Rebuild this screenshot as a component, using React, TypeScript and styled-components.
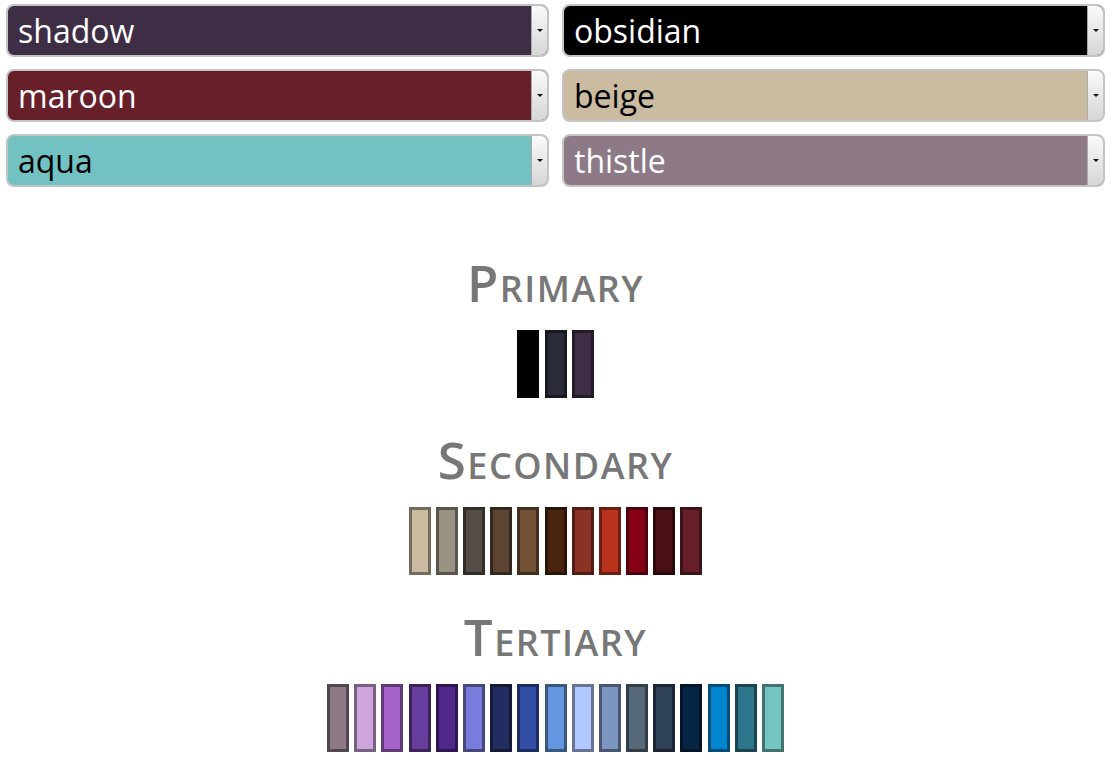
import React from 'react';
import styled, { createGlobalStyle } from 'styled-components';

const GlobalStyle = createGlobalStyle`
  html, body {
    margin: 0;
    padding: 0;
    background: #fff;
    font-family: 'Open Sans', 'Noto Sans', sans-serif;
  }
`;

const Page = styled.div`
  padding: 4px 9px 0 6px;
`;

const PickerGrid = styled.div`
  display: grid;
  grid-template-columns: 1fr 1fr;
  column-gap: 13px;
  row-gap: 12px;
`;

const Picker = styled.div<{ $bg: string; $fg: string }>`
  display: flex;
  height: 53px;
  box-sizing: border-box;
  border: 2px solid #c4c4c4;
  border-radius: 8px;
  overflow: hidden;
  background: ${(p) => p.$bg};
  color: ${(p) => p.$fg};
`;

const PickerSelect = styled.select`
  flex: 1;
  appearance: none;
  -webkit-appearance: none;
  border: none;
  outline: none;
  background: transparent;
  color: inherit;
  font-family: 'Open Sans', sans-serif;
  font-size: 32px;
  padding: 0 0 0 10px;
  margin: 0;
`;

const ArrowButton = styled.div`
  width: 15px;
  display: flex;
  align-items: center;
  justify-content: center;
  border-left: 1px solid #a8a8a8;
  background: linear-gradient(#fafafa, #e6e6e6 55%, #d6d6d6);
`;

const Triangle = styled.div`
  width: 0;
  height: 0;
  border-left: 3px solid transparent;
  border-right: 3px solid transparent;
  border-top: 3px solid #111;
`;

const Group = styled.section`
  display: flex;
  flex-direction: column;
  align-items: center;
`;

const Heading = styled.h2`
  margin: 0;
  font-family: 'Open Sans', sans-serif;
  font-weight: 600;
  font-size: 51px;
  line-height: 56px;
  letter-spacing: 1.5px;
  font-variant: small-caps;
  color: #777;
`;

const SwatchRow = styled.div`
  display: flex;
  gap: 5.2px;
  margin-top: 20px;
`;

const Swatch = styled.div<{ $fill: string; $edge: string }>`
  width: 22px;
  height: 68px;
  box-sizing: border-box;
  border: 3px solid ${(p) => p.$edge};
  background: ${(p) => p.$fill};
`;

const Groups = styled.div`
  display: flex;
  flex-direction: column;
  gap: 33px;
  margin-top: 67px;
`;

const darken = (hex: string, k = 0.58) => {
  const n = parseInt(hex.slice(1), 16);
  const r = Math.round(((n >> 16) & 255) * k);
  const g = Math.round(((n >> 8) & 255) * k);
  const b = Math.round((n & 255) * k);
  return `rgb(${r}, ${g}, ${b})`;
};

const pickers = [
  { name: 'shadow', bg: '#3d2d45', fg: '#fff' },
  { name: 'obsidian', bg: '#000000', fg: '#fff' },
  { name: 'maroon', bg: '#67202a', fg: '#fff' },
  { name: 'beige', bg: '#cabba1', fg: '#000' },
  { name: 'aqua', bg: '#72c2c3', fg: '#000' },
  { name: 'thistle', bg: '#8e7a87', fg: '#fff' },
];

const palettes = [
  { title: 'Primary', colors: ['#000000', '#2a2b38', '#3d2e45'] },
  {
    title: 'Secondary',
    colors: ['#cbbba0', '#999384', '#554d47', '#5b4431', '#725135', '#47250e', '#8a3224', '#b8331d', '#850016', '#481012', '#67202a'],
  },
  {
    title: 'Tertiary',
    colors: [
      '#8e7a87', '#cfa5de', '#a663cc', '#673e9d', '#50288a', '#787cda', '#222d61', '#334da5', '#6496df',
      '#b1c8fe', '#7d95c1', '#566978', '#2e4156', '#062443', '#0185ce', '#2e768c', '#74c5c2',
    ],
  },
];

const App: React.FC = () => {
  return (
    <Page>
      <GlobalStyle />
      <PickerGrid>
        {pickers.map((p) => (
          <Picker key={p.name} $bg={p.bg} $fg={p.fg}>
            <PickerSelect defaultValue={p.name}>
              <option value={p.name}>{p.name}</option>
            </PickerSelect>
            <ArrowButton>
              <Triangle />
            </ArrowButton>
          </Picker>
        ))}
      </PickerGrid>
      <Groups>
        {palettes.map((pal) => (
          <Group key={pal.title}>
            <Heading>{pal.title}</Heading>
            <SwatchRow>
              {pal.colors.map((c, i) => (
                <Swatch key={i} $fill={c} $edge={c === '#000000' ? '#000' : darken(c)} />
              ))}
            </SwatchRow>
          </Group>
        ))}
      </Groups>
    </Page>
  );
};

export default App;
